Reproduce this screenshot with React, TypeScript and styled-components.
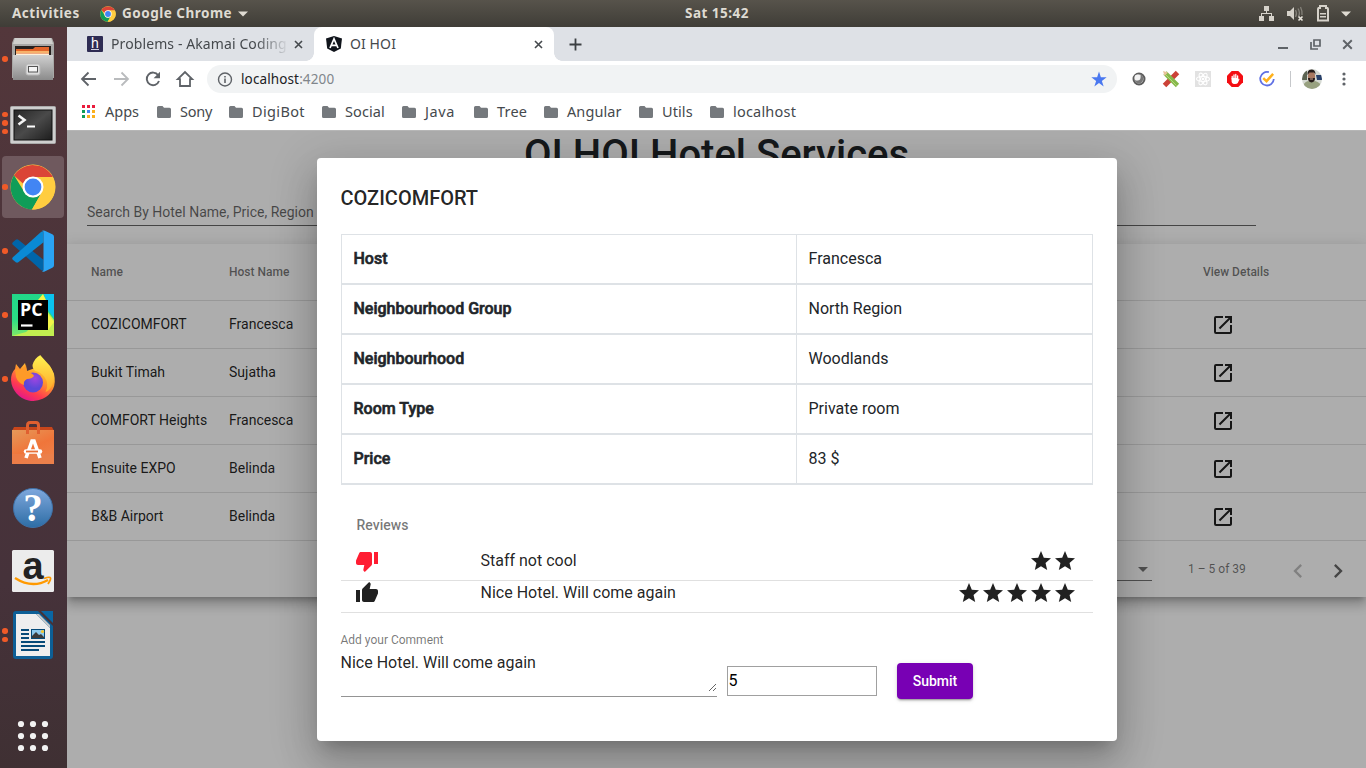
import React from "react";
import styled, { createGlobalStyle, css } from "styled-components";
import {
  MdArrowDropDown,
  MdChevronLeft,
  MdChevronRight,
  MdOpenInNew,
  MdStar,
  MdThumbDown,
  MdThumbUp,
} from "react-icons/md";

const GlobalStyle = createGlobalStyle`
  * { box-sizing: border-box; }
  html, body { margin: 0; padding: 0; }
  body { width: 1366px; height: 768px; overflow: hidden; background: #fff; }
  svg { display: block; flex: none; overflow: visible; }
`;

const uiFont = css`
  font-family: "Noto Sans", "Open Sans", sans-serif;
`;

/* ---------- desktop ---------- */

const Desktop = styled.div`
  width: 1366px;
  height: 768px;
  display: flex;
  flex-direction: column;
  font-family: Roboto, sans-serif;
`;

const TopBar = styled.header`
  ${uiFont}
  flex: none;
  height: 27px;
  display: grid;
  grid-template-columns: 1fr auto 1fr;
  align-items: center;
  background: linear-gradient(#57534b, #3f3d37);
  color: #dfdbd2;
  font-size: 13.5px;
  font-weight: 700;
  letter-spacing: 0.5px;
  white-space: nowrap;
`;

const TopLeft = styled.div`
  display: flex;
  align-items: center;
  padding-left: 12px;
`;

const TopLabel = styled.span<{ $w: number; $gap?: number }>`
  width: ${(p) => p.$w}px;
  margin-left: ${(p) => p.$gap ?? 0}px;
  padding-bottom: 1px;
  line-height: 25px;
`;

const Clock = styled.div`
  padding: 0 0 1px 68px;
  line-height: 25px;
`;

const TopRight = styled.div`
  display: flex;
  align-items: center;
  justify-content: flex-end;
  gap: 13px;
  padding-right: 15px;
`;

const Workspace = styled.div`
  flex: 1;
  min-height: 0;
  display: flex;
`;

/* ---------- dock ---------- */

const DockBar = styled.nav`
  flex: none;
  width: 67px;
  display: flex;
  flex-direction: column;
  gap: 2px;
  padding: 1px 3px 1px 2px;
  background: linear-gradient(#53373b, #49333a 45%, #46323a 75%, #3f3033);
`;

const DockItem = styled.div<{ $active?: boolean; $drop?: number }>`
  position: relative;
  width: 62px;
  height: 62px;
  padding-top: ${(p) => p.$drop ?? 0}px;
  border-radius: 4px;
  display: flex;
  align-items: center;
  justify-content: center;
  background: ${(p) => (p.$active ? "#6f595e" : "transparent")};
`;

const RunDots = styled.div`
  position: absolute;
  left: 0;
  top: 0;
  bottom: 0;
  display: flex;
  flex-direction: column;
  justify-content: center;
  gap: 3px;
`;

const RunDot = styled.i`
  width: 5.5px;
  height: 5.5px;
  border-radius: 50%;
  background: #f05a28;
`;

const DockSpacer = styled.div`
  flex: 1;
`;

/* ---------- browser chrome ---------- */

const Browser = styled.div`
  flex: 1;
  min-width: 0;
  display: flex;
  flex-direction: column;
  background: #fff;
`;

const TabStrip = styled.div`
  ${uiFont}
  flex: none;
  height: 34px;
  display: flex;
  background: #dee1e6;
  color: #45494d;
  font-size: 14px;
`;

const Tab = styled.div<{ $active?: boolean }>`
  position: relative;
  width: ${(p) => (p.$active ? 240 : 247)}px;
  display: flex;
  align-items: center;
  padding: 0 11px 0 ${(p) => (p.$active ? 12 : 20)}px;
  background: ${(p) => (p.$active ? "#fff" : "transparent")};
  border-radius: 8px 8px 0 0;
  ${(p) =>
    p.$active &&
    css`
      &::before,
      &::after {
        content: "";
        position: absolute;
        bottom: 0;
        width: 8px;
        height: 8px;
      }
      &::before {
        left: -8px;
        background: radial-gradient(circle at 0 0, transparent 7.5px, #fff 8px);
      }
      &::after {
        right: -8px;
        background: radial-gradient(circle at 100% 0, transparent 7.5px, #fff 8px);
      }
    `}
`;

const TabTitle = styled.span<{ $fade?: boolean }>`
  flex: 1;
  margin: -1px 0 0 8px;
  overflow: hidden;
  white-space: nowrap;
  letter-spacing: 0.1px;
  ${(p) =>
    p.$fade &&
    css`
      margin-right: 8px;
      mask-image: linear-gradient(90deg, #000 145px, transparent 178px);
    `}
`;

const NewTab = styled.div`
  display: flex;
  align-items: center;
  padding-left: 15px;
`;

const WindowButtons = styled.div`
  margin-left: auto;
  display: flex;
  align-items: center;
  gap: 21px;
  padding-right: 13px;
`;

const Toolbar = styled.div`
  flex: none;
  height: 36px;
  display: flex;
  align-items: center;
`;

const NavButtons = styled.div`
  display: flex;
  gap: 12px;
  padding-left: 12px;
  width: 140px;
`;

const Omnibox = styled.div`
  ${uiFont}
  width: 910px;
  height: 28px;
  border-radius: 14px;
  background: #f1f3f4;
  display: flex;
  align-items: center;
  padding: 0 10px 0 11px;
  font-size: 13.5px;
  color: #202124;
`;

const Url = styled.span`
  margin-left: 8px;
  flex: 1;
  letter-spacing: 0.12px;
`;

const UrlPort = styled.span`
  color: #80868b;
`;

const Extensions = styled.div`
  display: flex;
  align-items: center;
  gap: 16px;
  padding-left: 14px;
`;

const Divider = styled.i`
  width: 1px;
  height: 16px;
  margin: 0 -5px 0 -1px;
  background: #c6c8cb;
`;

const MenuButton = styled.span`
  margin-left: 4px;
`;

const BookmarkBar = styled.div`
  ${uiFont}
  flex: none;
  height: 34px;
  display: flex;
  padding: 0 0 4px 15px;
  border-bottom: 1px solid #b6b6b6;
  color: #45494d;
  font-size: 14.5px;
`;

const Bookmark = styled.div<{ $w: number }>`
  width: ${(p) => p.$w}px;
  display: flex;
  align-items: center;
  white-space: nowrap;
`;

const BookmarkLabel = styled.span<{ $ls?: number; $gap?: number }>`
  margin-left: ${(p) => p.$gap ?? 9}px;
  padding-bottom: 2px;
  letter-spacing: ${(p) => p.$ls ?? 0}px;
`;

/* ---------- hotel page ---------- */

const Page = styled.main`
  position: relative;
  flex: 1;
  min-height: 0;
  overflow: hidden;
  background: #fff;
  color: #212529;
`;

const PageTitle = styled.h1`
  margin: 0;
  height: 48px;
  font-size: 40px;
  font-weight: 500;
  line-height: 48px;
  text-align: center;
`;

const SearchField = styled.div`
  width: 1169px;
  height: 47px;
  margin: 0 0 18px 20px;
  padding-top: 24px;
  border-bottom: 1px solid rgba(0, 0, 0, 0.6);
  font-size: 14px;
  line-height: 18px;
  color: rgba(0, 0, 0, 0.6);
`;

const HotelCard = styled.section`
  box-shadow: 0 5px 5px -3px rgba(0, 0, 0, 0.2), 0 8px 10px 1px rgba(0, 0, 0, 0.14),
    0 3px 14px 2px rgba(0, 0, 0, 0.12);
`;

const HotelRow = styled.div<{ $head?: boolean }>`
  display: grid;
  grid-template-columns: 138px 974px 1fr;
  align-items: center;
  height: ${(p) => (p.$head ? 57 : 48)}px;
  padding: 0 0 ${(p) => (p.$head ? 0 : 1)}px 24px;
  border-bottom: 1px solid rgba(0, 0, 0, 0.12);
  font-size: ${(p) => (p.$head ? 12 : 14)}px;
  font-weight: ${(p) => (p.$head ? 500 : 400)};
  color: ${(p) => (p.$head ? "rgba(0,0,0,.54)" : "rgba(0,0,0,.87)")};
`;

const DetailsCell = styled.span`
  padding: 2px 0 0 8px;
`;

const Paginator = styled.div`
  height: 56px;
  display: flex;
  align-items: center;
  justify-content: flex-end;
  padding-right: 14px;
  font-size: 12px;
  color: rgba(0, 0, 0, 0.54);
`;

const PageSize = styled.div`
  width: 56px;
  height: 28px;
  margin-top: -4px;
  padding-top: 4px;
  display: flex;
  justify-content: flex-end;
  align-items: center;
  border-bottom: 1px solid rgba(0, 0, 0, 0.54);
`;

const PageSizeArrow = styled(MdArrowDropDown)`
  margin-right: -3px;
`;

const RangeLabel = styled.span`
  width: 58px;
  margin: 0 38px 0 36px;
  white-space: nowrap;
`;

const PagerArrow = styled.span<{ $off?: boolean }>`
  margin-top: 3px;
  margin-left: ${(p) => (p.$off ? 0 : 12)}px;
  color: ${(p) => (p.$off ? "rgba(0,0,0,.26)" : "rgba(0,0,0,.6)")};
`;

/* ---------- dialog ---------- */

const Backdrop = styled.div`
  position: absolute;
  inset: 0;
  display: flex;
  align-items: center;
  justify-content: center;
  background: rgba(0, 0, 0, 0.32);
`;

const Dialog = styled.section`
  width: 800px;
  height: 583px;
  padding: 24px;
  background: #fff;
  border-radius: 4px;
  color: rgba(0, 0, 0, 0.87);
  box-shadow: 0 11px 15px -7px rgba(0, 0, 0, 0.2), 0 24px 38px 3px rgba(0, 0, 0, 0.14),
    0 9px 46px 8px rgba(0, 0, 0, 0.12);
`;

const DialogTitle = styled.h2`
  margin: 0 0 20px;
  font-size: 20px;
  font-weight: 500;
  line-height: 32px;
`;

const Facts = styled.div`
  border: 1px solid #dee2e6;
  border-bottom: 0;
  color: #212529;
`;

const FactRow = styled.div`
  display: grid;
  grid-template-columns: 455px 1fr;
  height: 50px;
  border-bottom: 2px solid #dee2e6;
  font-size: 16px;
  line-height: 24px;
`;

const FactName = styled.div`
  padding: 12px 12px 11px;
  font-weight: 500;
  -webkit-text-stroke: 0.6px currentColor;
  border-right: 1px solid #dee2e6;
`;

const FactValue = styled.div`
  padding: 12px 12px 11px;
`;

const ReviewsTitle = styled.h3`
  margin: 0;
  padding: 32px 16px 16px;
  font-size: 14px;
  font-weight: 500;
  line-height: 16px;
  color: rgba(0, 0, 0, 0.54);
`;

const ReviewRow = styled.div`
  height: 32px;
  display: grid;
  grid-template-columns: 124px 1fr auto;
  padding: 0 15.5px 0 16px;
  border-bottom: 1px solid #e0e0e0;
  font-size: 16px;
  line-height: 23px;
`;

const Thumb = styled.span<{ $bad?: boolean }>`
  margin-left: -1.5px;
  color: ${(p) => (p.$bad ? "#ff1d32" : "#212121")};
`;

const Stars = styled.span`
  display: flex;
  color: #212121;
`;

const CommentForm = styled.form`
  display: flex;
  align-items: flex-start;
  padding-top: 20px;
`;

const CommentField = styled.div`
  width: 376px;
  height: 64px;
  margin-right: 10px;
  display: flex;
  flex-direction: column;
  border-bottom: 1px solid #949494;
`;

const CommentLabel = styled.label`
  font-size: 12px;
  line-height: 14px;
  color: rgba(0, 0, 0, 0.54);
`;

const CommentBody = styled.div`
  flex: 1;
  display: flex;
  justify-content: space-between;
  align-items: flex-start;
  padding-top: 7px;
  font-size: 16px;
  line-height: 18px;
`;

const Grip = styled.span`
  align-self: flex-end;
  padding-bottom: 4px;
`;

const RatingInput = styled.div`
  width: 150px;
  height: 30px;
  margin: 33px 20px 0 0;
  padding: 0 1px;
  border: 1px solid #a0a0a0;
  font-size: 16px;
  line-height: 28px;
  color: #000;
`;

const SubmitButton = styled.button`
  width: 76px;
  height: 36px;
  margin-top: 30px;
  padding: 0 0 0 1px;
  border: 0;
  border-radius: 4px;
  background: #7800b4;
  color: #fff;
  font: 500 14px/36px Roboto, sans-serif;
  box-shadow: 0 3px 1px -2px rgba(0, 0, 0, 0.2), 0 2px 2px 0 rgba(0, 0, 0, 0.14),
    0 1px 5px 0 rgba(0, 0, 0, 0.12);
`;

/* ---------- drawings ---------- */

const ChromeLogo = ({ size }: { size: number }) => (
  <svg width={size} height={size} viewBox="0 0 46 46">
    <circle cx="23" cy="23" r="22.5" fill="#fc4" />
    <path d="M4 11.5A22.5 22.5 0 0 1 42.8 13H23a10 10 0 0 0-9.5 7z" fill="#db4437" />
    <path d="M4 11.2A22.5 22.5 0 0 0 22 45.5L32 28a10 10 0 0 1-17.7 0z" fill="#0f9d58" />
    <path d="M22 45.5A22.5 22.5 0 0 0 42.8 13H23a10 10 0 0 1 9 15z" fill="#ffcd40" />
    <circle cx="23" cy="23" r="10.5" fill="#fff" />
    <circle cx="23" cy="23" r="8.4" fill="#4285f4" />
  </svg>
);

const FilesLogo = () => (
  <svg width="44" height="46" viewBox="0 0 44 46">
    <defs>
      <linearGradient id="cab" x2="0" y2="1">
        <stop stopColor="#d0d0d0" />
        <stop offset="1" stopColor="#8b8b8b" />
      </linearGradient>
    </defs>
    <path d="M3 2h38l2 5v35H1V7z" fill="#a8a8a6" />
    <path d="M4 2h36l2 6H2z" fill="#cfcfcd" />
    <path d="M4 10h36v12H4z" fill="#26211f" />
    <path d="M5 13h17l2-2h14v10H5z" fill="#e2652a" />
    <path d="M5 15h33v2H5z" fill="#f6b26b" />
    <path d="M5 17.500h33v1.500H5z" fill="#fff0d8" />
    <path d="M2 19h40v25H2z" fill="url(#cab)" />
    <rect x="15" y="28" width="14" height="11" rx="2" fill="#dedede" stroke="#b5b5b5" />
    <rect x="17.5" y="30.5" width="9" height="5.5" fill="#f5f5f5" stroke="#555" />
  </svg>
);

const TerminalLogo = () => (
  <svg width="46" height="38" viewBox="0 0 46 38">
    <defs>
      <linearGradient id="term" x2="1" y2="1">
        <stop stopColor="#262626" />
        <stop offset=".5" stopColor="#4a4a4a" />
        <stop offset="1" stopColor="#1d1d1d" />
      </linearGradient>
    </defs>
    <rect x=".5" y=".5" width="45" height="37" rx="1" fill="#cfcfcf" stroke="#aaa" />
    <rect x="4" y="4" width="38" height="30" fill="url(#term)" stroke="#111" />
    <path d="M8.500 9.500l6 4.500-6 4.500" fill="none" stroke="#f3f3f3" strokeWidth="2.600" />
    <path d="M17 20.500h8" stroke="#fff" strokeWidth="2" />
  </svg>
);

const CodeLogo = () => (
  <svg width="42" height="42" viewBox="0 0 100 100">
    <path d="M2 29l7-6q3-2 6 0l60 48v25q-2 2-6-1L2 35q-3-3 0-6z" fill="#0065a9" />
    <path d="M2 71l7 6q3 2 6 0l60-48V4q-2-2-6 1L2 65q-3 3 0 6z" fill="#0a8ad4" />
    <path d="M71 99q4 1 8-1l17-8q4-2 4-6V16q0-4-4-6L78 2q-5-2-7 0 4-1 4 4v88q0 5-4 5z" fill="#2aa4f4" />
  </svg>
);

const PyCharmLogo = () => (
  <svg width="42" height="42" viewBox="0 0 42 42">
    <defs>
      <linearGradient id="pyGreen" x2="0" y2="1">
        <stop stopColor="#21d789" />
        <stop offset=".6" stopColor="#2bdc85" />
        <stop offset="1" stopColor="#7fe868" />
      </linearGradient>
    </defs>
    <rect width="42" height="42" fill="url(#pyGreen)" />
    <path d="M36 18l6 8v16H0l14-4z" fill="#c3ee50" />
    <path d="M32 0h10v24l-6-8z" fill="#0bc3ef" />
    <path d="M26 6l5-6 5 10v10l6 8-6 8z" fill="#f3f548" />
    <rect x="6" y="6" width="30" height="30" fill="#000" />
    <text x="8" y="22" fontFamily="Open Sans, sans-serif" fontWeight="700" fontSize="17" textLength="22.500" lengthAdjust="spacingAndGlyphs" fill="#fff">PC</text>
    <path d="M9 31.500h11.500" stroke="#fff" strokeWidth="2.200" />
  </svg>
);

const FirefoxLogo = () => (
  <svg width="46" height="47" viewBox="0 0 46 47">
    <defs>
      <linearGradient id="fx" x1=".8" y1=".1" x2=".3" y2="1">
        <stop stopColor="#fff04a" />
        <stop offset=".4" stopColor="#ffa02a" />
        <stop offset=".75" stopColor="#ff3a50" />
        <stop offset="1" stopColor="#e01590" />
      </linearGradient>
      <linearGradient id="fxTail" x2="0" y2="1">
        <stop stopColor="#fff350" />
        <stop offset="1" stopColor="#ffa52a" />
      </linearGradient>
      <radialGradient id="globe" cx=".6" cy=".3">
        <stop stopColor="#a045e0" />
        <stop offset="1" stopColor="#5a48d8" />
      </radialGradient>
    </defs>
    <g transform="translate(0 -1)">
      <path d="M6 9l4 5 5-6 2 8 8-3 6-12 9 10 4 8q2 9-1 15A22.300 22.300 0 0 1 1 25q0-7 4-11z" fill="url(#fx)" />
      <circle cx="23" cy="27.500" r="10" fill="url(#globe)" />
      <path d="M22.500 10q2-7 8-10 1 6 8 10 7 7 5 16-2 9-8 11 4-8-1-15-4-5-9-6-3-2-3-6z" fill="url(#fxTail)" />
      <path d="M5 14l6 1 5-5 1 7q6 1 7 4-2 3-7 3-4 2-3 6-6-2-8-8z" fill="#ff9a28" />
    </g>
  </svg>
);

const SoftwareLogo = () => (
  <svg width="42" height="44" viewBox="0 0 42 44">
    <defs>
      <linearGradient id="bag" x2=".6" y2="1">
        <stop stopColor="#e59a5a" />
        <stop offset=".6" stopColor="#f0753a" />
        <stop offset="1" stopColor="#ee8048" />
      </linearGradient>
    </defs>
    <path d="M2 6h38l2 4H0z" fill="#c8461b" />
    <path d="M0 9h42v34H0z" fill="url(#bag)" />
    <path d="M0 33h42v10H0z" fill="#e9804f" opacity=".6" />
    <path d="M15.500 13V4.500Q15.500 1.500 18 1.500h6q2.500 0 2.500 3V13" fill="none" stroke="#e05f30" strokeWidth="3" />
    <path d="M14 37l6-17h2l6 17" fill="none" stroke="#fff" strokeWidth="3.600" />
    <path d="M14 30.500h14" stroke="#fff" strokeWidth="4.500" strokeLinecap="round" />
    <path d="M14 30.500h12" stroke="#e87037" strokeWidth="1.800" />
  </svg>
);

const HelpLogo = () => (
  <svg width="42" height="42" viewBox="0 0 42 42">
    <defs>
      <linearGradient id="help" x2="0" y2="1">
        <stop stopColor="#7fa8dd" />
        <stop offset="1" stopColor="#2d6da5" />
      </linearGradient>
    </defs>
    <circle cx="21" cy="21" r="19.500" fill="url(#help)" stroke="#3e71a8" />
    <text x="21" y="34" textAnchor="middle" fontFamily="Liberation Serif, serif" fontWeight="700" fontSize="39" fill="#fff">?</text>
  </svg>
);

const AmazonLogo = () => (
  <svg width="42" height="42" viewBox="0 0 42 42">
    <rect width="42" height="42" rx="1.500" fill="#ececec" />
    <text x="21" y="28.500" textAnchor="middle" fontFamily="Liberation Sans, sans-serif" fontWeight="700" fontSize="38" fill="#222">a</text>
    <path d="M3 28q17 11 33 2" fill="none" stroke="#ff9900" strokeWidth="2.400" />
    <path d="M32 28.500q6-2 6.500-.5t-2.500 6" fill="none" stroke="#ff9900" strokeWidth="1.800" />
  </svg>
);

const WriterLogo = () => (
  <svg width="40" height="48" viewBox="0 0 40 48">
    <path d="M3 0h22l15 15v30q0 3-3 3H3q-3 0-3-3V3q0-3 3-3z" fill="#0d5f96" />
    <path d="M28 0h12v12z" fill="#0a66a3" />
    <path d="M3 3h20l14 14v28H3z" fill="#eee" />
    <path d="M23 3l14 14v-3L26 3z" fill="#c8c8c8" />
    <path d="M8 19h8M8 23h8M8 27h8M8 31h24M8 35h24M8 39h18" stroke="#064a78" strokeWidth="2" />
    <rect x="18.500" y="18.500" width="13" height="9" fill="#8cc9ee" stroke="#064a78" />
    <path d="M19 27v-2l4-4 3 3 2-1 3 3v1z" fill="#3b3b3b" />
    <circle cx="29.500" cy="20.500" r="1.600" fill="#f5c82e" />
  </svg>
);

const AppGrid = () => (
  <svg width="32" height="32" viewBox="0 0 32 32" fill="#f2f2f2">
    {[4, 16, 28].map((y) => [4, 16, 28].map((x) => <circle key={`${x}-${y}`} cx={x} cy={y} r="3.100" />))}
  </svg>
);

const Caret = () => (
  <svg width="10" height="6" viewBox="0 0 10 6" fill="#dfdbd2"><path d="M0 .5h10L5 5.500z" /></svg>
);

const NetworkGlyph = () => (
  <svg width="15" height="15" viewBox="0 0 15 15" fill="#d6d2ca">
    <path d="M5 0h5v5H5zM0 10h5v5H0zM10 10h5v5h-5zM7 5h1v2h5v3h-1V8H3v2H2V7h5z" transform="translate(1 0)" />
  </svg>
);

const VolumeGlyph = () => (
  <svg width="17" height="16" viewBox="-1 0 17 16">
    <path d="M0 5h3l4-4v13l-4-4H0z" fill="#d6d2ca" />
    <path d="M8.500 4q2 3.500 0 7M11 2.500q2.500 4 .5 8M13.500 1q2 4 1.500 8" fill="none" stroke="#85827a" strokeWidth="1.300" />
    <path d="M11.500 10.500l4 4m0-4l-4 4" stroke="#e8e4dc" strokeWidth="1.700" />
  </svg>
);

const BatteryGlyph = () => (
  <svg width="12" height="17" viewBox="-1 0 12 17">
    <path d="M3 3V1h6v2h1.500l.5 1v11.500H1V4l.5-1z" fill="none" stroke="#d6d2ca" strokeWidth="2" />
    <path d="M3 8h6v1.500H3zM3 11h6v1.500H3z" fill="#d6d2ca" />
  </svg>
);

const CloseGlyph = ({ size = 9, color = "#45494d" }: { size?: number; color?: string }) => (
  <svg width={size} height={size} viewBox="0 0 9 9">
    <path d="M1 1l7 7m0-7L1 8" stroke={color} strokeWidth="1.600" />
  </svg>
);

const BackGlyph = ({ color, flip }: { color: string; flip?: boolean }) => (
  <svg width="20" height="20" viewBox="0 0 20 20" fill="none" stroke={color} strokeWidth="1.800">
    {flip ? <path d="M3 10h13.500M10.500 3.500L17 10l-6.500 6.500" /> : <path d="M17 10H3.500M9.500 3.500L3 10l6.500 6.500" />}
  </svg>
);

const ReloadGlyph = () => (
  <svg width="20" height="20" viewBox="0 0 20 20">
    <path d="M15.200 6.200A6.300 6.300 0 1 0 16 12" fill="none" stroke="#5f6368" strokeWidth="1.900" />
    <path d="M17 2.800v6.400h-6.400z" fill="#5f6368" />
  </svg>
);

const HomeGlyph = () => (
  <svg width="20" height="20" viewBox="0 0 20 20">
    <path d="M2.800 10.200L10 3l7.200 7.200H15V17H5v-6.800z" fill="none" stroke="#5f6368" strokeWidth="1.800" />
  </svg>
);

const InfoGlyph = () => (
  <svg width="15" height="15" viewBox="0 0 15 15">
    <circle cx="7" cy="7.500" r="6.500" fill="none" stroke="#5f6368" strokeWidth="1.400" />
    <path d="M7 6.500v4.500M7 4v1.500" stroke="#5f6368" strokeWidth="1.600" />
  </svg>
);

const BookmarkStar = () => (
  <svg width="16" height="16" viewBox="0 0 24 24" fill="#4a78f0">
    <path d="M12 18l7 5.200-2.700-8.300L23.500 9.500h-8.700L12 .8 9.200 9.500H.5l7.200 5.400L5 23.200z" />
  </svg>
);

const FolderGlyph = () => (
  <svg width="14" height="12" viewBox="0 0 14 12" fill="#75797d">
    <path d="M1.500 0h4L7 1.700h5.500q1.500 0 1.500 1.500v7.300q0 1.500-1.500 1.500h-11Q0 12 0 10.500v-9Q0 0 1.500 0z" />
  </svg>
);

const AppsGlyph = () => {
  const colors = ["#ea1c3c", "#ea1c3c", "#ea1c3c", "#0f9d58", "#4285f4", "#fbb01c", "#0f9d58", "#fbb01c", "#fbb01c"];
  return (
    <svg width="13" height="13" viewBox="0 0 13 13">
      {colors.map((c, i) => (
        <rect key={i} x={(i % 3) * 5} y={Math.floor(i / 3) * 5} width="3" height="3" fill={c} />
      ))}
    </svg>
  );
};

const HackerFavicon = () => (
  <svg width="16" height="16" viewBox="0 0 16 16">
    <rect width="16" height="16" rx="1" fill="#2e2c53" />
    <text x="8" y="11.500" textAnchor="middle" fontFamily="Liberation Sans, sans-serif" fontSize="14" fill="#fff">h</text>
    <path d="M4 13.500h8" stroke="#cfcfe0" />
  </svg>
);

const AngularFavicon = () => (
  <svg width="16" height="16" viewBox="0 0 16 16">
    <path d="M8 0l8 2.500-1.200 10L8 16l-6.800-3.500L0 2.500z" fill="#10141b" />
    <path d="M4 12L8 2.800 12 12M5.500 9.300h5" fill="none" stroke="#fff" strokeWidth="1.700" />
  </svg>
);

const SphereExt = () => (
  <svg width="16" height="16" viewBox="0 0 16 16">
    <circle cx="8" cy="8" r="5.500" fill="#ddd" stroke="#5c5c5c" strokeWidth="2" />
    <path d="M3 9q6 2 7-6 4 4 1 8-4 4-8-2z" fill="#777" />
    <circle cx="6.500" cy="6.500" r="3" fill="#f2f2f2" />
  </svg>
);

const PencilExt = () => (
  <svg width="16" height="16" viewBox="0 0 16 16">
    <path d="M1.500 14.500L14.500 1.500" stroke="#cb4237" strokeWidth="5" />
    <path d="M2 2l12.500 12.500" stroke="#86b84b" strokeWidth="4.600" />
    <path d="M0 0l5 1.500L1.500 5z" fill="#e8c49a" />
    <path d="M3 4l10.500 10.500" stroke="#b5d878" />
  </svg>
);

const ReactExt = () => (
  <svg width="16" height="16" viewBox="0 0 16 16">
    <rect width="16" height="16" fill="#e2e2e2" />
    <g fill="none" stroke="#fff" strokeWidth="1.100">
      <ellipse cx="8" cy="8" rx="6.500" ry="2.500" />
      <ellipse cx="8" cy="8" rx="6.500" ry="2.500" transform="rotate(60 8 8)" />
      <ellipse cx="8" cy="8" rx="6.500" ry="2.500" transform="rotate(120 8 8)" />
    </g>
    <circle cx="8" cy="8" r="1.300" fill="#fff" />
  </svg>
);

const AdblockExt = () => (
  <svg width="16" height="16" viewBox="0 0 16 16">
    <path d="M4.700 0h6.600L16 4.700v6.600L11.300 16H4.700L0 11.300V4.700z" fill="#f40d12" />
    <path d="M5.200 8V5.500M7 8V4M8.800 8V3.500M10.600 8V5" stroke="#fff" strokeWidth="1.300" strokeLinecap="round" />
    <path d="M4.600 7h6.600v1.500l.8-.8q.8 0 .4.800L10.800 12q-.8 1-2.600 1-3.200 0-3.600-2.600z" fill="#fff" />
  </svg>
);

const CheckExt = () => (
  <svg width="16" height="16" viewBox="0 0 17 17" fill="none">
    <path d="M10.500 1.300A7.200 7.200 0 1 0 15.700 8.500" stroke="#5f70e4" strokeWidth="1.900" />
    <path d="M4.500 7.500L8 10.800l7-7.800" stroke="#ffb11b" strokeWidth="2.600" />
  </svg>
);

const Avatar = () => (
  <svg width="20" height="20" viewBox="0 0 20 20">
    <defs><clipPath id="round"><circle cx="10" cy="10" r="10" /></clipPath></defs>
    <g clipPath="url(#round)">
      <rect width="20" height="20" fill="#d5d9d3" />
      <rect width="5" height="11" fill="#5c6352" />
      <path d="M14 6h6v5h-5z" fill="#28406a" />
      <path d="M1 20q0-7 5-8l3 1 4-1q6 1 7 8z" fill="#98a180" />
      <ellipse cx="9.500" cy="7.500" rx="3.600" ry="5.500" fill="#a87860" />
      <path d="M5.500 6q-.5-5.500 4-5.500 4 0 4 5l-1.500-2H7.500zM6 9h7q0 4-3.500 4.500Q6 13 6 9z" fill="#251c1a" />
      <path d="M8 10h3" stroke="#d0a090" />
    </g>
  </svg>
);

const MenuDots = () => (
  <svg width="4" height="14" viewBox="0 0 4 14" fill="#5f6368">
    <circle cx="2" cy="2" r="1.600" /><circle cx="2" cy="7" r="1.600" /><circle cx="2" cy="12" r="1.600" />
  </svg>
);

/* ---------- data ---------- */

const dock = [
  { id: "files", icon: <FilesLogo />, dots: 1 },
  { id: "terminal", icon: <TerminalLogo />, dots: 3, drop: 4 },
  { id: "chrome", icon: <ChromeLogo size={46} />, dots: 1, active: true },
  { id: "code", icon: <CodeLogo />, dots: 1 },
  { id: "pycharm", icon: <PyCharmLogo />, dots: 1 },
  { id: "firefox", icon: <FirefoxLogo />, dots: 1 },
  { id: "software", icon: <SoftwareLogo />, dots: 0 },
  { id: "help", icon: <HelpLogo />, dots: 0, drop: 2 },
  { id: "amazon", icon: <AmazonLogo />, dots: 0 },
  { id: "writer", icon: <WriterLogo />, dots: 2 },
];

const bookmarks = [
  { name: "Sony", w: 72, ls: -0.2 },
  { name: "DigiBot", w: 93, ls: 0.35 },
  { name: "Social", w: 80, ls: 0.1 },
  { name: "Java", w: 72, ls: 0.6 },
  { name: "Tree", w: 70, ls: 0.2 },
  { name: "Angular", w: 95, ls: 0.1 },
  { name: "Utils", w: 71, ls: 0.1 },
  { name: "localhost", w: 90, ls: 0.2 },
];

const hotels = [
  ["COZICOMFORT", "Francesca"],
  ["Bukit Timah", "Sujatha"],
  ["COMFORT Heights", "Francesca"],
  ["Ensuite EXPO", "Belinda"],
  ["B&B Airport", "Belinda"],
];

const facts = [
  ["Host", "Francesca"],
  ["Neighbourhood Group", "North Region"],
  ["Neighbourhood", "Woodlands"],
  ["Room Type", "Private room"],
  ["Price", "83 $"],
];

const reviews = [
  { text: "Staff not cool", stars: 2, bad: true },
  { text: "Nice Hotel. Will come again", stars: 5, bad: false },
];

/* ---------- app ---------- */

export default function App() {
  return (
    <Desktop>
      <GlobalStyle />
      <TopBar>
        <TopLeft>
          <TopLabel $w={88}>Activities</TopLabel>
          <ChromeLogo size={16} />
          <TopLabel $w={116} $gap={6}>Google Chrome</TopLabel>
          <Caret />
        </TopLeft>
        <Clock>Sat 15:42</Clock>
        <TopRight>
          <NetworkGlyph />
          <VolumeGlyph />
          <BatteryGlyph />
          <Caret />
        </TopRight>
      </TopBar>

      <Workspace>
        <DockBar>
          {dock.map((d) => (
            <DockItem key={d.id} $active={d.active} $drop={d.drop}>
              <RunDots>{Array.from({ length: d.dots }, (_, i) => <RunDot key={i} />)}</RunDots>
              {d.icon}
            </DockItem>
          ))}
          <DockSpacer />
          <DockItem><AppGrid /></DockItem>
        </DockBar>

        <Browser>
          <TabStrip>
            <Tab>
              <HackerFavicon />
              <TabTitle $fade>Problems - Akamai Coding</TabTitle>
              <CloseGlyph />
            </Tab>
            <Tab $active>
              <AngularFavicon />
              <TabTitle>OI HOI</TabTitle>
              <CloseGlyph />
            </Tab>
            <NewTab>
              <svg width="13" height="13" viewBox="0 0 13 13">
                <path d="M6.500 .5v12M.5 6.500h12" stroke="#3c4043" strokeWidth="1.800" />
              </svg>
            </NewTab>
            <WindowButtons>
              <svg width="11" height="11" viewBox="0 0 11 11"><path d="M0 9h10" stroke="#5f6368" strokeWidth="2" /></svg>
              <svg width="11" height="11" viewBox="0 0 11 11" fill="none" stroke="#5f6368" strokeWidth="1.700">
                <path d="M4 1h6v6H4zM1 3v7h7" />
              </svg>
              <CloseGlyph size={11} color="#5f6368" />
            </WindowButtons>
          </TabStrip>

          <Toolbar>
            <NavButtons>
              <BackGlyph color="#5f6368" />
              <BackGlyph color="#b9bbbd" flip />
              <ReloadGlyph />
              <HomeGlyph />
            </NavButtons>
            <Omnibox>
              <InfoGlyph />
              <Url>localhost<UrlPort>:4200</UrlPort></Url>
              <BookmarkStar />
            </Omnibox>
            <Extensions>
              <SphereExt />
              <PencilExt />
              <ReactExt />
              <AdblockExt />
              <CheckExt />
              <Divider />
              <Avatar />
              <MenuButton><MenuDots /></MenuButton>
            </Extensions>
          </Toolbar>

          <BookmarkBar>
            <Bookmark $w={75}>
              <AppsGlyph />
              <BookmarkLabel $gap={10}>Apps</BookmarkLabel>
            </Bookmark>
            {bookmarks.map((b) => (
              <Bookmark key={b.name} $w={b.w}>
                <FolderGlyph />
                <BookmarkLabel $ls={b.ls}>{b.name}</BookmarkLabel>
              </Bookmark>
            ))}
          </BookmarkBar>

          <Page>
            <PageTitle>OI HOI Hotel Services</PageTitle>
            <SearchField>Search By Hotel Name, Price, Region</SearchField>
            <HotelCard>
              <HotelRow $head>
                <span>Name</span>
                <span>Host Name</span>
                <span>View Details</span>
              </HotelRow>
              {hotels.map(([name, host]) => (
                <HotelRow key={name}>
                  <span>{name}</span>
                  <span>{host}</span>
                  <DetailsCell><MdOpenInNew size={24} /></DetailsCell>
                </HotelRow>
              ))}
              <Paginator>
                <PageSize><PageSizeArrow size={24} /></PageSize>
                <RangeLabel>1 – 5 of 39</RangeLabel>
                <PagerArrow $off><MdChevronLeft size={28} /></PagerArrow>
                <PagerArrow><MdChevronRight size={28} /></PagerArrow>
              </Paginator>
            </HotelCard>

            <Backdrop>
              <Dialog>
                <DialogTitle>COZICOMFORT</DialogTitle>
                <Facts>
                  {facts.map(([name, value]) => (
                    <FactRow key={name}>
                      <FactName>{name}</FactName>
                      <FactValue>{value}</FactValue>
                    </FactRow>
                  ))}
                </Facts>
                <ReviewsTitle>Reviews</ReviewsTitle>
                {reviews.map((r) => (
                  <ReviewRow key={r.text}>
                    <Thumb $bad={r.bad}>{r.bad ? <MdThumbDown size={24} /> : <MdThumbUp size={24} />}</Thumb>
                    <span>{r.text}</span>
                    <Stars>{Array.from({ length: r.stars }, (_, i) => <MdStar key={i} size={24} />)}</Stars>
                  </ReviewRow>
                ))}
                <CommentForm>
                  <CommentField>
                    <CommentLabel>Add your Comment</CommentLabel>
                    <CommentBody>
                      <span>Nice Hotel. Will come again</span>
                      <Grip>
                        <svg width="9" height="9" viewBox="0 0 9 9">
                          <path d="M1 8l7-7M5 8l3-3" stroke="#666" strokeWidth="1" />
                        </svg>
                      </Grip>
                    </CommentBody>
                  </CommentField>
                  <RatingInput>5</RatingInput>
                  <SubmitButton type="button">Submit</SubmitButton>
                </CommentForm>
              </Dialog>
            </Backdrop>
          </Page>
        </Browser>
      </Workspace>
    </Desktop>
  );
}
